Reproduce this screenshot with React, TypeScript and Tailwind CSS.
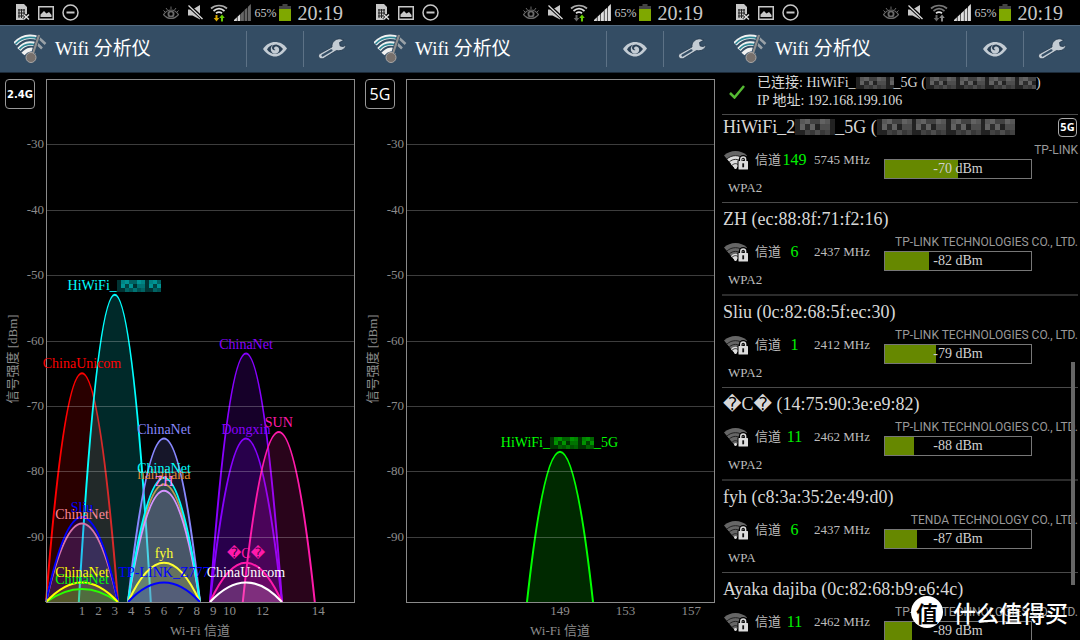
import type { ReactNode } from 'react';
import clsx from 'clsx';

interface Network {
  name: string;
  mhz: number;
  dbm: number;
  color: string;
  masked?: string;
}

interface Tick {
  label: string;
  mhz: number;
}

interface AccessPoint {
  ssid: string;
  mac: string;
  channel: number;
  mhz: number;
  dbm: number;
  vendor: string;
  security?: string;
  hidden?: boolean;
}

const NETWORKS_24: Network[] = [
  { name: 'ChinaUnicom', mhz: 2412, dbm: -65, color: '#ff0000' },
  { name: 'HiWiFi_', mhz: 2422, dbm: -53, color: '#00ffff', masked: '' },
  { name: 'ChinaNet', mhz: 2462, dbm: -62, color: '#8800ff' },
  { name: 'Dongxin', mhz: 2462, dbm: -75, color: '#8800ff' },
  { name: 'SUN', mhz: 2472, dbm: -74, color: '#ff1aaa' },
  { name: 'ChinaNet', mhz: 2437, dbm: -75, color: '#8888ff' },
  { name: 'hahahaha', mhz: 2437, dbm: -82, color: '#e08830' },
  { name: 'ZH', mhz: 2437, dbm: -83, color: '#ff80ff' },
  { name: 'ChinaNet', mhz: 2437, dbm: -81, color: '#00ffff' },
  { name: 'ChinaNet', mhz: 2412, dbm: -88, color: '#ff8899' },
  { name: 'Sliu', mhz: 2412, dbm: -87, color: '#0000ff' },
  { name: 'fyh', mhz: 2437, dbm: -94, color: '#ffff33' },
  { name: '\uFFFDC\uFFFD', mhz: 2462, dbm: -94, color: '#ff1aaa' },
  { name: 'ChinaNet', mhz: 2412, dbm: -98, color: '#00ff00' },
  { name: 'ChinaNet', mhz: 2412, dbm: -97, color: '#ffff00' },
  { name: 'TP-LINK_Z777', mhz: 2437, dbm: -97, color: '#0000ff' },
  { name: 'ChinaUnicom', mhz: 2462, dbm: -97, color: '#ffffff' },
];

const NETWORKS_5: Network[] = [
  { name: 'HiWiFi_', mhz: 5745, dbm: -77, color: '#00ff00', masked: '_5G' },
];

const TICKS_24: Tick[] = [
  ...[1, 2, 3, 4, 5, 6, 7, 8, 9, 10, 12].map((c) => ({ label: String(c), mhz: 2407 + c * 5 })),
  { label: '14', mhz: 2484 },
];

const TICKS_5: Tick[] = [149, 153, 157].map((c) => ({ label: String(c), mhz: 5000 + c * 5 }));

const ACCESS_POINTS: AccessPoint[] = [
  { ssid: 'HiWiFi_2', mac: '', channel: 149, mhz: 5745, dbm: -70, vendor: 'TP-LINK', security: 'WPA2', hidden: true },
  { ssid: 'ZH', mac: 'ec:88:8f:71:f2:16', channel: 6, mhz: 2437, dbm: -82, vendor: 'TP-LINK TECHNOLOGIES CO., LTD.', security: 'WPA2' },
  { ssid: 'Sliu', mac: '0c:82:68:5f:ec:30', channel: 1, mhz: 2412, dbm: -79, vendor: 'TP-LINK TECHNOLOGIES CO., LTD.', security: 'WPA2' },
  { ssid: '\uFFFDC\uFFFD', mac: '14:75:90:3e:e9:82', channel: 11, mhz: 2462, dbm: -88, vendor: 'TP-LINK TECHNOLOGIES CO., LTD.', security: 'WPA2' },
  { ssid: 'fyh', mac: 'c8:3a:35:2e:49:d0', channel: 6, mhz: 2437, dbm: -87, vendor: 'TENDA TECHNOLOGY CO., LTD.', security: 'WPA' },
  { ssid: 'Ayaka dajiba', mac: '0c:82:68:b9:e6:4c', channel: 11, mhz: 2462, dbm: -89, vendor: 'TP-LINK TECHNOLOGIES CO., LTD.' },
];

/* Pixelated patch that covers the private part of a name */
function MosaicCells({ x, y, cols, rows, size, color }: { x: number; y: number; cols: number; rows: number; size: number; color: string }) {
  const cells: ReactNode[] = [];
  for (let r = 0; r < rows; r++) {
    for (let c = 0; c < cols; c++) {
      const level = ((c * c * 5 + r * 7 + c * r) % 7) / 16 + 0.2;
      cells.push(
        <rect key={`${r}-${c}`} x={x + c * size} y={y + r * size} width={size} height={size} fill={color} opacity={level} />,
      );
    }
  }
  return <g shapeRendering="crispEdges">{cells}</g>;
}

function Mosaic({ cols, rows, size, className }: { cols: number; rows: number; size: number; className: string }) {
  return (
    <svg viewBox={`0 0 ${cols * size} ${rows * size}`} preserveAspectRatio="none" className={clsx('shrink-0', className)} aria-hidden="true">
      <MosaicCells x={0} y={0} cols={cols} rows={rows} size={size} color="#aaaaaa" />
    </svg>
  );
}

function StatusBar({ bars, down, up }: { bars: number; down: string; up: string }) {
  return (
    <div className="flex h-[25px] items-center bg-black pl-4 pr-[17px] text-[#c8c8c8]">
      <svg viewBox="0 0 14 17" className="h-[17px] w-3.5">
        <path d="M0 0h8l3 3v7l-2 1 2 2-2 3H0z" fill="#c8c8c8" />
        <path d="M2 6h7M2 9h7M2 12h5M3 5v9M5.500 5v9M8 5v6" stroke="#222" strokeWidth="1" />
        <path d="M7.500 10.500l5.500 5M13 10.500l-5.500 5" stroke="#000" strokeWidth="3" />
        <path d="M7.500 10.500l5.500 5M13 10.500l-5.500 5" stroke="#ddd" strokeWidth="1.500" />
      </svg>
      <svg viewBox="0 0 16 14" className="ml-2 h-3.5 w-4">
        <rect x="0.750" y="0.750" width="14.500" height="12.500" fill="none" stroke="currentColor" strokeWidth="1.500" />
        <path d="M2.500 11V8.500L6 5l2.500 2.500L11 6l2.500 3v2z" fill="currentColor" />
      </svg>
      <svg viewBox="0 0 17 17" className="ml-2 size-[17px]" fill="none" stroke="currentColor">
        <circle cx="8.500" cy="8.500" r="7.500" strokeWidth="1.500" />
        <path d="M4.500 8.500h8" strokeWidth="2" />
      </svg>

      <svg viewBox="0 0 16 14" className="ml-auto h-3.5 w-4" fill="none" stroke="#6a6a6a">
        <path d="M0.500 8.500C3 5 5.500 4 8 4s5 1 7.500 4.500C13 11.500 10.500 12.500 8 12.500S3 11.500 0.500 8.500z" strokeWidth="1.200" />
        <circle cx="8" cy="8" r="2.600" strokeWidth="1.800" />
        <path d="M8 3V0.500M4.500 4L3 2M11.500 4L13 2M2 6L0.500 4.500M14 6l1.500-1.500" strokeWidth="1" />
      </svg>
      <svg viewBox="0 0 15 15" className="ml-[9px] size-[15px]">
        <path d="M0 4.500h4.500L12 0v14.500L4.500 10.500H0z" fill="#c8c8c8" />
        <path d="M0 0l15 14" stroke="#000" strokeWidth="3.500" />
        <path d="M0.500 0.500L14.500 14" stroke="#ddd" strokeWidth="1.300" />
      </svg>
      <svg viewBox="0 0 18 18" className="ml-[7px] size-[18px]" fill="none">
        <path d="M1 4.500C5.500 0.500 12.500 0.500 17 4.500" stroke={up === '#888888' ? '#777' : '#aaa'} strokeWidth="1.700" />
        <path d="M3.500 7C7 4 11 4 14.500 7" stroke={up === '#888888' ? '#777' : '#ddd'} strokeWidth="1.700" />
        <path d="M6 9.300C8 7.800 10 7.800 12 9.300" stroke="#ddd" strokeWidth="1.700" />
        <path d="M5.500 11h2v3h1.800L6.500 17.500 3.700 14h1.800z" fill={down} />
        <path d="M11 17.500h2V14h1.800L12 10.500 9.200 14H11z" fill={up} />
      </svg>
      <svg viewBox="0 0 17 17" className="ml-1.5 size-[17px]">
        {[0, 1, 2, 3, 4].map((i) => (
          <path
            key={i}
            d={`M${i * 3.5} 17v-${i * 3.3 + 1}l2.900-2.700v${i * 3.3 + 3.7}z`}
            fill={i < bars ? '#dddddd' : '#666666'}
          />
        ))}
      </svg>
      <span className="ml-[3px] text-xs">65%</span>
      <svg viewBox="0 0 12 17" className="ml-[3px] h-[17px] w-3">
        <path d="M3.500 0h5v2H12v15H0V2h3.500z" fill="#444" />
        <path d="M0 5h12v12H0z" fill="#7fa800" />
      </svg>
      <span className="ml-1.5 text-xl leading-6">20:19</span>
    </div>
  );
}

function AppBar() {
  return (
    <header className="flex h-12 items-center border-b border-t border-b-[#1d2b39] border-t-[#546b80] bg-[#344d64]">
      <svg viewBox="0 0 34 30" className="ml-3.5 h-[30px] w-[34px] shrink-0" fill="none" strokeLinecap="butt">
        <path d="M1 10C9 1 22 0 31 9" stroke="#f2f2f2" strokeWidth="4.500" />
        <path d="M1.500 9.800C9 2 22 1 30.500 8.800" stroke="#2f8796" strokeWidth="1.800" />
        <path d="M5 15.500C11 8 20 7.500 27 14" stroke="#f2f2f2" strokeWidth="4.500" />
        <path d="M5.500 15.200C11 9 20 8.500 26.500 13.700" stroke="#2f8796" strokeWidth="1.800" />
        <path d="M9 20C13 15 19 14 23 18" stroke="#f2f2f2" strokeWidth="4" />
        <path d="M24 1h12v18H20z" fill="#344d64" />
        <path d="M25 4l6.500 6M23 9.500l5 5" stroke="#9aa2a8" strokeWidth="2.500" />
        <path d="M25 1L18.500 21" stroke="#344d64" strokeWidth="4" />
        <path d="M25 1L18.500 21" stroke="#8d8d8d" strokeWidth="2.200" />
        <circle cx="17" cy="23.500" r="5" fill="#77706c" stroke="#aaa7a5" />
      </svg>
      <h1 className="ml-[7px] flex-1 whitespace-nowrap text-[19px] leading-6 text-white">Wifi 分析仪</h1>
      <button type="button" aria-label="查看" className="flex h-9 w-[57px] items-center justify-center border-l border-[#5d7286]">
        <svg viewBox="0 0 24 16" className="h-4 w-6">
          <path d="M0 8C3.500 3 7.500 1 12 1s9 2 12 6.500C20 13 16 15.500 12 15.500S4 13.500 0 8z" fill="#c3ccd4" />
          <path d="M4 8.500C5.500 5.500 8 4 10 3.700 7.500 6 7 9 9 11.500c2 2 6 1.500 7-1.500.8-2.500-1-5-3.500-4.500-2 .5-2 3 0 3.500-1.500 1-3.500-.3-3.500-2.200C9 4.500 11.500 3.300 14 3.700c3 .8 5 3 6 4.300-2 3-5 5-8 5s-6-1.700-8-4.500z" fill="#2b4055" />
        </svg>
      </button>
      <button type="button" aria-label="设置" className="flex h-9 w-[57px] items-center justify-center border-l border-[#5d7286]">
        <svg viewBox="0 0 28 22" className="h-[22px] w-7">
          <path
            d="M1.500 15.800L14 9C13.500 4.500 17 .8 22 .8l4 1.200-4.500 2.500.7 3.500 3 .6L28 7c-.5 4-4.500 6.500-9.500 5.500L5.500 20.500c-4 1.500-6.500-2.500-4-4.700z"
            fill="#c3ccd4"
            stroke="#22364a"
            strokeWidth="0.800"
          />
          <path d="M4.500 17.500L13.500 12.300" stroke="#344d64" strokeWidth="2.200" strokeLinecap="round" />
        </svg>
      </button>
    </header>
  );
}

/* Plot area inside the 360x567 chart */
const LEFT = 46;
const RIGHT = 354;
const TOP = 6;
const BOTTOM = 529;
const PX_PER_MHZ = 3.28;

const yOf = (dbm: number) => TOP + ((-20 - dbm) * (BOTTOM - TOP)) / 80;

interface ChannelChartProps {
  band: string;
  networks: Network[];
  ticks: Tick[];
  originMhz: number;
  originX: number;
  spread: number;
}

function ChannelChart({ band, networks, ticks, originMhz, originX, spread }: ChannelChartProps) {
  const xOf = (mhz: number) => originX + (mhz - originMhz) * PX_PER_MHZ;

  return (
    <div className="relative">
      <svg viewBox="0 0 360 567" className="block w-full" fontSize="14" textAnchor="middle">
        {networks.map((n, i) => {
          const x = xOf(n.mhz);
          const y = yOf(n.dbm);
          return (
            <path
              key={i}
              d={`M${x - spread} ${BOTTOM}Q${x} ${2 * y - BOTTOM} ${x + spread} ${BOTTOM}`}
              fill={n.color}
              fillOpacity="0.16"
              stroke={n.color}
              strokeWidth="2"
            />
          );
        })}
        {[-30, -40, -50, -60, -70, -80, -90].map((dbm) => (
          <g key={dbm}>
            <line x1={LEFT} x2={RIGHT} y1={Math.round(yOf(dbm)) + 0.5} y2={Math.round(yOf(dbm)) + 0.5} stroke="#fff" strokeOpacity="0.24" />
            <text x="44" y={yOf(dbm) + 4} fontSize="13" textAnchor="end" fill="#8c8c8c">
              {dbm}
            </text>
          </g>
        ))}
        <rect x={LEFT + 0.5} y={TOP + 0.5} width={RIGHT - LEFT} height={BOTTOM - TOP} fill="none" stroke="#8a8a8a" />
        {networks.map((n, i) => {
          const x = xOf(n.mhz);
          const y = yOf(n.dbm) - 5;
          if (n.masked === undefined) {
            return (
              <text key={i} x={x} y={y} fill={n.color}>
                {n.name}
              </text>
            );
          }
          const maskX = n.masked ? x - 10 : x + 2;
          return (
            <g key={i} fill={n.color}>
              <text x={maskX} y={y} textAnchor="end">
                {n.name}
              </text>
              <MosaicCells x={maskX} y={y - 10} cols={11} rows={3} size={4} color={n.color} />
              <text x={maskX + 44} y={y} textAnchor="start">
                {n.masked}
              </text>
            </g>
          );
        })}
        <g fontSize="13" fill="#8c8c8c">
          {ticks.map((t) => (
            <text key={t.label} x={xOf(t.mhz)} y="542">
              {t.label}
            </text>
          ))}
          <text x="200" y="562">
            Wi-Fi 信道
          </text>
          <text transform="translate(17 286) rotate(-90)">信号强度 [dBm]</text>
        </g>
      </svg>
      <button
        type="button"
        className={clsx(
          'absolute left-[5px] top-1.5 size-[30px] rounded-sm border border-[#999] bg-black text-white',
          band === '5G' ? 'font-["Open_Sans",sans-serif] text-base' : 'font-["DejaVu_Sans",sans-serif] text-[10px] font-bold',
        )}
      >
        {band}
      </button>
    </div>
  );
}

function LockedWifiIcon({ dbm }: { dbm: number }) {
  const inner = dbm > -75 ? '#dddddd' : '#666666';
  return (
    <svg viewBox="0 0 24 20" className="h-5 w-6 shrink-0" fill="none">
      <path d="M0 5.500C6 -0.500 17 -0.500 23 5.500L11.500 19z" fill="#666" />
      <path d="M3 9C7.500 4.500 15.500 4.500 20 9L11.500 19z" fill={inner} />
      {dbm > -85 && <path d="M7 14.200C9.500 11 13.500 11 16 14.200L11.500 19z" fill="#ddd" />}
      <path d="M2.800 9.200C7.500 4.500 15.500 4.500 20.200 9.200M5.200 12C9 8.500 14 8.500 17.800 12M7.800 15.500C10.500 13 12.500 13 15.200 15.500" stroke="#1a1a1a" strokeWidth="0.900" />
      <circle cx="11.500" cy="17.500" r="1.400" fill="#ddd" />
      <path d="M16.500 12V9.500a2.700 2.700 0 0 1 5.400 0V12" stroke="#000" strokeWidth="3.500" />
      <path d="M13.500 10.500h10.500V20H13.500z" fill="#000" />
      <rect x="14.500" y="11" width="9.500" height="8.500" rx="0.500" fill="#ddd" />
      <path d="M16.800 12V9.300a2.400 2.400 0 0 1 4.800 0V12" stroke="#ddd" strokeWidth="1.500" />
      <path d="M19.200 13.300v4" stroke="#111" strokeWidth="1.800" />
    </svg>
  );
}

function AccessPointRow({ ap }: { ap: AccessPoint }) {
  return (
    <li className="mx-0.5 h-[92px] border-b border-[#4a4a4a] pt-1 text-[13px] text-[#bdbdbd] first:h-[88px] first:pt-0 even:h-[93px] even:border-b-2 even:border-[#2c2c2c]">
      <h2 className="flex h-6 items-center whitespace-pre pl-px text-lg leading-6 text-[#d8d8d8]">
        {ap.hidden ? (
          <>
            {ap.ssid}
            <Mosaic cols={8} rows={3} size={5} className="h-4 w-10" />
            {'_5G ('}
            <Mosaic cols={28} rows={3} size={5} className="h-4 w-[138px]" />
            <span className='ml-auto mr-px flex size-[19px] items-center justify-center rounded-sm border border-[#aaa] font-["Open_Sans",sans-serif] text-[11px] font-bold text-white'>
              5G
            </span>
          </>
        ) : (
          `${ap.ssid} (${ap.mac})`
        )}
      </h2>
      <div className="flex">
        <div className="w-[162px] shrink-0 pt-[11px]">
          <div className="flex h-5 items-center pl-0.5">
            <LockedWifiIcon dbm={ap.dbm} />
            <span className="ml-[7px] w-[26px]">信道</span>
            <span className="w-[27px] text-center text-base text-[#00f000]">{ap.channel}</span>
            <span className="ml-1.5 whitespace-nowrap">{ap.mhz} MHz</span>
          </div>
          {ap.security && <div className="mt-2 pl-1.5 leading-5">{ap.security}</div>}
        </div>
        <div className="flex-1 pt-0.5">
          <div className="whitespace-nowrap text-right font-[Roboto,sans-serif] text-xs leading-[18px] text-[#999]">{ap.vendor}</div>
          <div
            role="meter"
            aria-label="信号强度"
            aria-valuemin={-100}
            aria-valuemax={-40}
            aria-valuenow={ap.dbm}
            className="relative h-5 w-[148px] border border-[#777]"
          >
            <div className="h-full bg-[#668800]" style={{ width: `${((ap.dbm + 100) / 60) * 100}%` }} />
            <span className="absolute inset-0 text-center text-sm leading-[18px] text-[#d0d0d0]">{ap.dbm} dBm</span>
          </div>
        </div>
      </div>
    </li>
  );
}

function AccessPointList() {
  return (
    <div className="relative h-0 min-h-0 flex-1 overflow-hidden">
      <div className="mx-0.5 flex h-[42px] items-center border-b border-[#4a4a4a] pb-1 pl-[7px] text-sm leading-[18px] text-[#d8d8d8]">
        <svg viewBox="0 0 16 14" className="h-3.5 w-4 shrink-0" fill="none">
          <path d="M1 8l4.500 4.500L15 1" stroke="#55bb33" strokeWidth="2.500" />
        </svg>
        <div className="ml-3">
          <div className="flex items-center whitespace-pre">
            {'已连接: HiWiFi_'}
            <Mosaic cols={9} rows={3} size={4} className="h-3 w-[38px]" />
            {'_5G ('}
            <Mosaic cols={26} rows={3} size={4} className="h-3 w-[110px]" />)
          </div>
          <div>IP 地址: 192.168.199.106</div>
        </div>
      </div>
      <ul>
        {ACCESS_POINTS.map((ap) => (
          <AccessPointRow key={ap.mac} ap={ap} />
        ))}
      </ul>
      <div className="absolute right-[5px] top-[289px] h-[223px] w-1 bg-[#666]" />
    </div>
  );
}

function Phone({ children, bars, down, up }: { children: ReactNode; bars: number; down: string; up: string }) {
  return (
    <section className="flex min-w-0 flex-col overflow-hidden">
      <StatusBar bars={bars} down={down} up={up} />
      <AppBar />
      {children}
    </section>
  );
}

export default function App() {
  return (
    <main className='relative grid h-screen grid-cols-3 overflow-hidden bg-black font-["Liberation_Serif","Noto_Sans_CJK_SC","DejaVu_Sans",serif]'>
      <Phone bars={2} down="#d8a800" up="#66cc00">
        <ChannelChart band="2.4G" networks={NETWORKS_24} ticks={TICKS_24} originMhz={2412} originX={82} spread={36} />
      </Phone>
      <Phone bars={5} down="#666666" up="#66cc00">
        <ChannelChart band="5G" networks={NETWORKS_5} ticks={TICKS_5} originMhz={5745} originX={200} spread={33} />
      </Phone>
      <Phone bars={5} down="#666666" up="#888888">
        <AccessPointList />
      </Phone>
      <div className='absolute bottom-3 right-3 flex items-center gap-2.5 font-["Noto_Sans_CJK_SC",sans-serif] text-white'>
        <span className="flex size-8 items-center justify-center rounded-full bg-white text-[22px] font-bold leading-8 text-black">值</span>
        <span className="text-[23px] font-medium leading-8">什么值得买</span>
      </div>
    </main>
  );
}
